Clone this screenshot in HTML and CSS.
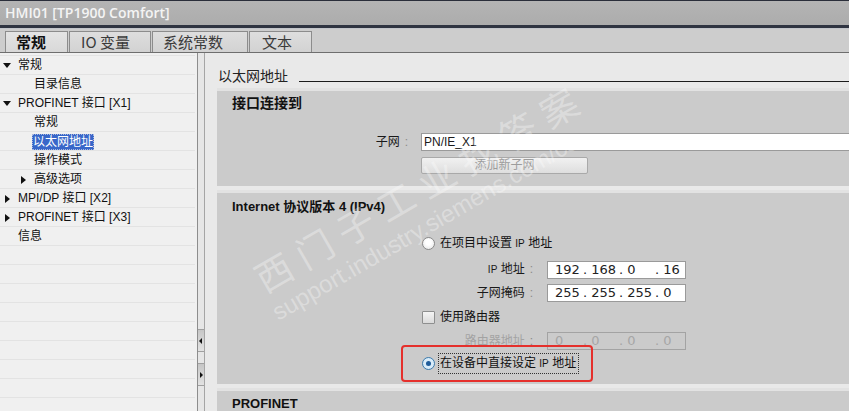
FILE: index.html
```html
<!DOCTYPE html>
<html lang="zh-CN">
<head>
<meta charset="utf-8">
<title>HMI01 [TP1900 Comfort]</title>
<link rel="stylesheet" href="styles.css">
</head>
<body>
<div class="titlebar">HMI01 [TP1900 Comfort]</div>
<div class="tabbar">
  <div class="tab active t1">常规</div>
  <div class="tab t2">IO 变量</div>
  <div class="tab t3">系统常数</div>
  <div class="tab t4">文本</div>
</div>
<div class="main">
  <div class="tree">
    <div class="row"><span class="tw down"></span>常规</div>
    <div class="row l2">目录信息</div>
    <div class="row"><span class="tw down"></span>PROFINET 接口 [X1]</div>
    <div class="row l2">常规</div>
    <div class="row l2"><span class="sel">以太网地址</span></div>
    <div class="row l2">操作模式</div>
    <div class="row l2b"><span class="tw right"></span>高级选项</div>
    <div class="row"><span class="tw right"></span>MPI/DP 接口 [X2]</div>
    <div class="row"><span class="tw right"></span>PROFINET 接口 [X3]</div>
    <div class="row l1n">信息</div>
  </div>
  <div class="splitter">
    <div class="sbtn sbtn-left"><span class="arr-l"></span></div>
    <div class="sbtn sbtn-right"><span class="arr-r"></span></div>
  </div>
  <div class="content">
    <div class="pagehead"><span>以太网地址</span><span class="rule"></span></div>

    <div class="section sec1">
      <div class="sechead">接口连接到</div>
      <div class="frow frow-sub">
        <div class="flabel w1">子网<span class="colon">:</span></div>
        <div class="field wide">PN/IE_X1</div>
      </div>
      <div class="frow frow-btn">
        <div class="flabel w1"></div>
        <div class="btn">添加新子网</div>
      </div>
    </div>

    <div class="section sec2">
      <div class="sechead">Internet 协议版本 4 (IPv4)</div>
      <div class="opt opt1"><span class="radio"></span><span class="optlabel">在项目中设置 <small>IP</small> 地址</span></div>
      <div class="frow r-ip">
        <div class="flabel w2"><small>IP</small> 地址<span class="colon">:</span></div>
        <div class="field ip"><span class="oct o1">192</span><span class="oct">. 168</span><span class="oct">. 0</span><span class="oct">. 16</span></div>
      </div>
      <div class="frow r-mask">
        <div class="flabel w2">子网掩码<span class="colon">:</span></div>
        <div class="field ip"><span class="oct o1">255</span><span class="oct">. 255</span><span class="oct">. 255</span><span class="oct">. 0</span></div>
      </div>
      <div class="opt opt-cb"><span class="check"></span><span class="optlabel">使用路由器</span></div>
      <div class="frow r-router">
        <div class="flabel w2 dis">路由器地址<span class="colon">:</span></div>
        <div class="field ip disabled"><span class="oct o1">0</span><span class="oct">. 0</span><span class="oct">. 0</span><span class="oct">. 0</span></div>
      </div>
      <div class="opt opt2"><span class="radio on"></span><span class="optlabel focus">在设备中直接设定 <small>IP</small> 地址</span></div>
    </div>

    <div class="section sec3">
      <div class="sechead">PROFINET</div>
    </div>
  </div>
</div>

<div class="wm">
  <div class="wm1">西门子工业找答案</div>
  <div class="wm2">support.industry.siemens.com/cs</div>
</div>
<div class="redbox"></div>
</body>
</html>
```

FILE: styles.css
```css
* { box-sizing: border-box; }

body {
  margin: 0;
  width: 849px;
  height: 411px;
  overflow: hidden;
  position: relative;
  background: #ebebeb;
  font-family: "Liberation Sans", "Noto Sans CJK SC", sans-serif;
  font-size: 12px;
  color: #1a1a1a;
}

.titlebar {
  height: 28px;
  border-top: 1px solid #2a2e3a;
  border-bottom: 3px solid #2f3441;
  background: linear-gradient(#b4b4b4, #acacac);
  color: #f4f4f4;
  font-family: "Open Sans", "Noto Sans CJK SC", sans-serif;
  font-size: 14px;
  font-weight: 600;
  line-height: 24px;
  padding-left: 5px;
}

.tabbar {
  height: 25px;
  background: #cdcdcd;
  border-top: 1px solid #c2c5ca;
  border-bottom: 1px solid #6e6e6e;
  display: flex;
  align-items: flex-end;
  padding-left: 5px;
  gap: 1px;
}

.tab {
  height: 21px;
  border: 1px solid #8c8c8c;
  border-bottom: none;
  background: linear-gradient(#dedede, #d2d2d2);
  font-family: "Noto Sans CJK SC", "Liberation Sans", sans-serif;
  font-size: 15px;
  line-height: 19px;
  color: #3a3a3a;
  padding-left: 10px;
}
.tab.active { font-weight: bold; color: #111; background: linear-gradient(#e4e4e4, #d8d8d8); }
.t1 { width: 63px; }
.t2 { width: 82px; padding-left: 11px; }
.t3 { width: 96px; }
.t4 { width: 63px; padding-left: 12px; }

.main {
  display: flex;
  height: 358px;
}

.tree {
  width: 197px;
  flex: none;
  padding-top: 3px;
  background-color: #f0f0f0;
  background-image: repeating-linear-gradient(to bottom, transparent 0 18px, #e3e3e3 18px 19px);
  background-position: 0 3px;
  background-size: 195px 19px;
  background-repeat: repeat-y;
}

.row {
  height: 19px;
  line-height: 19px;
  display: flex;
  align-items: center;
  padding-left: 2px;
  white-space: nowrap;
  color: #111;
}
.row.l2 { padding-left: 34px; }
.row.l2b { padding-left: 18px; }
.row.l1n { padding-left: 18px; }

.tw { width: 16px; flex: none; height: 19px; position: relative; }
.tw.down::before {
  content: "";
  position: absolute;
  left: 1px; top: 7px;
  border-left: 4px solid transparent;
  border-right: 4px solid transparent;
  border-top: 5px solid #111;
}
.tw.right::before {
  content: "";
  position: absolute;
  left: 3px; top: 6px;
  border-top: 4px solid transparent;
  border-bottom: 4px solid transparent;
  border-left: 5px solid #111;
}

.sel {
  margin-left: -2px;
  padding: 0 1px;
  height: 16px;
  line-height: 16px;
  background: #3867c9;
  color: #fff;
  outline: 1px dotted #a8b8e0;
  outline-offset: -1px;
}

.splitter {
  width: 8px;
  flex: none;
  border-left: 1px solid #8d8d8d;
  border-right: 1px solid #a5a5a5;
  background: #e6e6e6;
  display: flex;
  flex-direction: column;
  padding-top: 276px;
}
.sbtn {
  height: 23px;
  border-top: 1px solid #a0a0a0;
  border-bottom: 1px solid #a0a0a0;
  background: linear-gradient(#c6c6c6, #e2e2e2);
  position: relative;
}
.sbtn-right { margin-top: 11px; }
.arr-l, .arr-r { position: absolute; top: 8px; }
.arr-l { left: 1px; border-top: 3px solid transparent; border-bottom: 3px solid transparent; border-right: 3px solid #111; }
.arr-r { left: 2px; border-top: 3px solid transparent; border-bottom: 3px solid transparent; border-left: 3px solid #111; }

.content {
  flex: 1;
  padding-left: 12px;
  background: #e9e9e9;
  display: flex;
  flex-direction: column;
}

.pagehead {
  display: flex;
  align-items: flex-start;
  padding: 13px 0 4px 1px;
  height: 35px;
  font-family: "Noto Sans CJK SC", sans-serif;
  font-size: 14px;
  line-height: 18px;
  color: #222;
}
.pagehead .rule {
  flex: 1;
  height: 1px;
  background: #1c1c1c;
  margin: 15px 0 0 11px;
}

.section {
  background: #cbcbcb;
  flex: none;
  border-top: 3px solid #e2e2e2;
}
.sec1 { height: 98px; padding-top: 3px; }
.sec2 { margin-top: 4px; height: 194px; padding-top: 5px; }
.sec3 { margin-top: 4px; height: 30px; padding-top: 4px; }

.sechead {
  padding-left: 15px;
  font-size: 13px;
  font-weight: bold;
  line-height: 18px;
  color: #111;
  white-space: nowrap;
}
.sec1 .sechead { font-size: 14px; }

.frow { display: flex; align-items: center; }
.flabel {
  text-align: right;
  flex: none;
  white-space: nowrap;
  line-height: 18px;
  color: #1a1a1a;
}
.flabel.dis { color: #a3a3a3; }
.flabel small, .optlabel small { font-size: 10px; }
.colon { color: #8a8a8a; margin-left: 5px; }
.w1 { width: 191px; margin-right: 13px; }
.w2 { width: 316px; margin-right: 14px; }

.frow-sub { margin-top: 21px; }
.frow-btn { margin-top: 6px; }

.field {
  height: 18px;
  background: #fff;
  border: 1px solid #9a9a9a;
  line-height: 16px;
  padding-left: 2px;
  white-space: nowrap;
}
.field.wide { flex: 1; border-right: none; }
.field.ip {
  width: 139px;
  padding-left: 7px;
  font-family: "DejaVu Sans", sans-serif;
  font-size: 13px;
  color: #222;
  display: flex;
}
.field.disabled { background: transparent; border-color: #a3a3a3; color: #a6a6a6; }
.oct { width: 36px; flex: none; }
.oct.o1 { width: 28px; }

.btn {
  width: 167px;
  height: 17px;
  border: 1px solid #a9a9a9;
  border-radius: 2px;
  background: linear-gradient(#f1f1f1, #dedede);
  color: #9c9c9c;
  text-align: center;
  line-height: 15px;
}

.opt { display: flex; align-items: center; height: 18px; padding-left: 205px; }
.opt1 { margin-top: 18px; }
.r-ip { margin-top: 8px; }
.r-mask { margin-top: 5px; }
.opt-cb { margin-top: 6px; }
.r-router { margin-top: 6px; }
.opt2 { margin-top: 4px; }

.radio {
  width: 13px; height: 13px;
  border-radius: 50%;
  border: 1px solid #8a8a8a;
  background: radial-gradient(circle at 50% 40%, #ffffff 0 30%, #e2e2e2 100%);
  flex: none;
  position: relative;
}
.radio.on { border-color: #3d7bad; background: radial-gradient(circle, #d9ecf9 0 60%, #bcdcf2 100%); }
.radio.on::after {
  content: "";
  position: absolute;
  left: 3px; top: 3px;
  width: 5px; height: 5px;
  border-radius: 50%;
  background: #1f5c9a;
}
.check {
  width: 13px; height: 13px;
  border: 1px solid #8e8f8f;
  border-radius: 1px;
  background: linear-gradient(#f5f5f5, #dadada);
  flex: none;
}
.optlabel { margin-left: 5px; line-height: 17px; white-space: nowrap; color: #111; }
.optlabel.focus { outline: 1px dotted #333; outline-offset: 1px; margin-left: 5px; padding-right: 1px; }

.wm {
  position: absolute;
  left: 246px;
  top: 261px;
  transform: rotate(-30deg);
  transform-origin: 0 0;
  pointer-events: none;
  white-space: nowrap;
  color: rgba(255, 255, 255, 0.33);
}
.wm1 {
  font-family: "Noto Sans CJK SC", sans-serif;
  font-size: 37px;
  line-height: 44px;
  letter-spacing: 10px;
}
.wm2 {
  font-family: "Liberation Sans", sans-serif;
  font-size: 24px;
  line-height: 28px;
  margin-top: 2px;
  margin-left: -2px;
}

.redbox {
  position: absolute;
  left: 401px;
  top: 345px;
  width: 192px;
  height: 37px;
  border: 2.5px solid #e5302c;
  border-radius: 4px;
}
```
